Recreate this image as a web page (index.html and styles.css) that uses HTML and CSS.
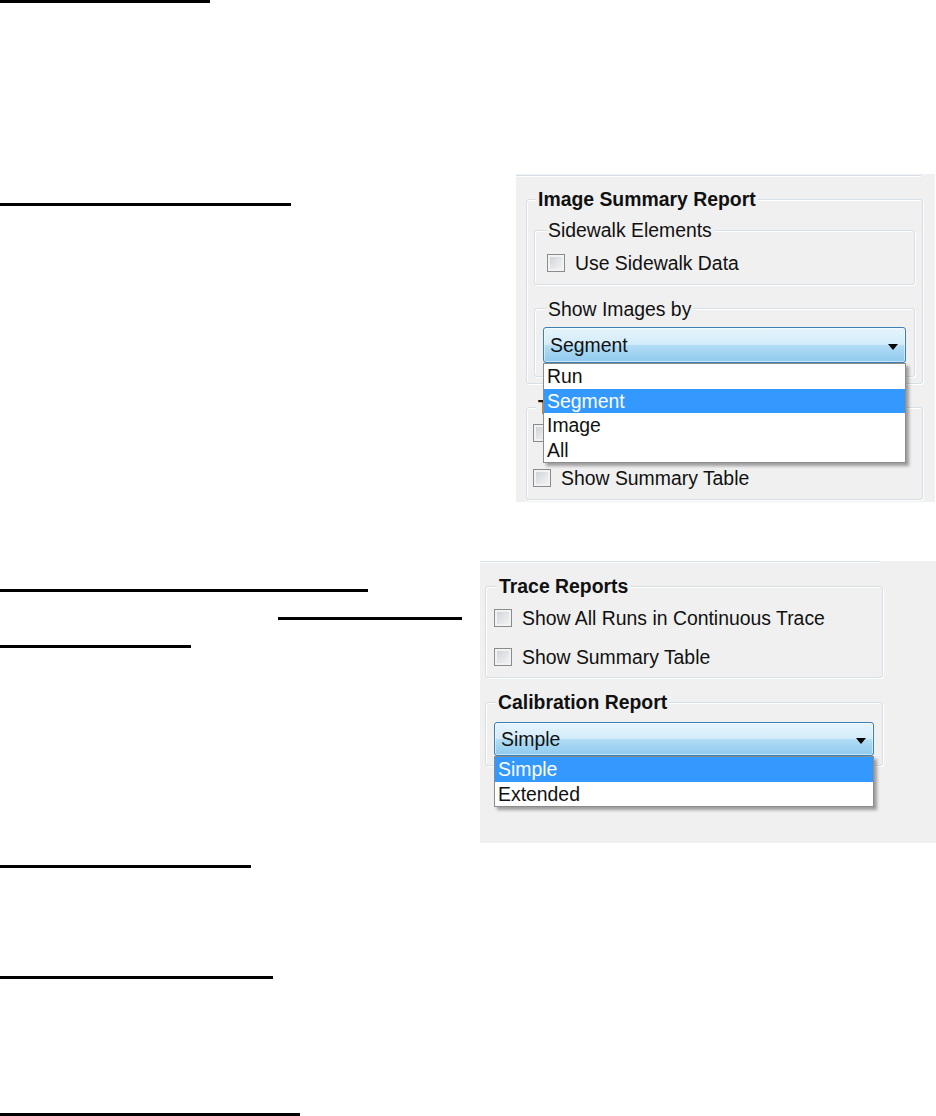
FILE: index.html
```html
<!DOCTYPE html>
<html lang="en">
<head>
<meta charset="utf-8">
<title>Report options</title>
<link rel="stylesheet" href="styles.css">
</head>
<body>
<div class="page">
  <div class="rule rule-a"></div>

  <section class="row row-b">
    <div class="notes notes-b">
      <div class="rule rule-b"></div>
    </div>
    <div class="panel panel-img">
      <div class="edge edge-img"></div>
      <div class="group group-isr">
        <div class="legend legend-bold legend-isr">Image Summary Report</div>
        <div class="group group-sidewalk">
          <div class="legend legend-sub">Sidewalk Elements</div>
          <div class="check check-sidewalk"><span class="box"></span><span>Use Sidewalk Data</span></div>
        </div>
        <div class="group group-showby">
          <div class="legend legend-sub legend-showby">Show Images by</div>
          <div class="combo combo-seg">
            <span class="combo-value">Segment</span>
            <svg class="arrow" width="10" height="6" viewBox="0 0 10 6"><path d="M0 0H10L5 6Z" fill="#000"/></svg>
            <ul class="dropdown">
              <li>Run</li>
              <li class="sel">Segment</li>
              <li>Image</li>
              <li>All</li>
            </ul>
          </div>
        </div>
      </div>
      <div class="group group-trace1">
        <div class="legend legend-bold legend-isr">Trace Reports</div>
        <div class="check check-t1a"><span class="box"></span><span>Show All Runs in Continuous Trace</span></div>
        <div class="check check-t1b"><span class="box"></span><span>Show Summary Table</span></div>
      </div>
    </div>
  </section>

  <section class="row row-c">
    <div class="notes notes-c">
      <div class="rule rule-c1"></div>
      <div class="rule rule-c2"></div>
      <div class="rule rule-c3"></div>
    </div>
    <div class="panel panel-cal">
      <div class="edge edge-cal"></div>
      <div class="group group-trace2">
        <div class="legend legend-bold legend-t2">Trace Reports</div>
        <div class="check check-t2a"><span class="box"></span><span>Show All Runs in Continuous Trace</span></div>
        <div class="check check-t2b"><span class="box"></span><span>Show Summary Table</span></div>
      </div>
      <div class="group group-cal">
        <div class="legend legend-bold legend-cal">Calibration Report</div>
        <div class="combo combo-cal">
          <span class="combo-value">Simple</span>
          <svg class="arrow" width="10" height="6" viewBox="0 0 10 6"><path d="M0 0H10L5 6Z" fill="#000"/></svg>
          <ul class="dropdown">
            <li class="sel">Simple</li>
            <li>Extended</li>
          </ul>
        </div>
      </div>
    </div>
  </section>

  <section class="notes notes-d">
    <div class="rule rule-d1"></div>
    <div class="rule rule-d2"></div>
    <div class="rule rule-d3"></div>
  </section>
</div>
</body>
</html>
```

FILE: styles.css
```css
html, body {
  margin: 0;
  padding: 0;
  background: #fff;
}
body {
  font-family: "Liberation Sans", Arial, sans-serif;
  color: #111;
  overflow: hidden;
}
.page {
  width: 936px;
}

/* document underlines */
.rule {
  height: 3px;
  background: #000;
}
.rule-a { width: 210px; }
.row {
  display: flex;
  align-items: flex-start;
}
.notes { flex: none; }
.row-b { margin-top: 171px; }
.notes-b { padding-top: 29px; }
.rule-b { width: 291px; }

.row-c { margin-top: 59px; }
.rule-c1 { width: 368px; margin-top: 28px; }
.rule-c2 { width: 184px; margin-left: 278px; margin-top: 25px; }
.rule-c3 { width: 191px; margin-top: 25px; }

.rule-d1 { width: 251px; margin-top: 22px; }
.rule-d2 { width: 273px; margin-top: 108px; }
.rule-d3 { width: 300px; margin-top: 134px; }

/* dialog panels */
.panel {
  background: #f0f0f0;
  box-sizing: border-box;
  margin-left: auto;
}
.panel-img {
  width: 419px;
  height: 328px;
  margin-right: 1px;
  padding-top: 1px;
}
.panel-cal {
  width: 456px;
  height: 282px;
}
.edge {
  height: 1px;
  background: #d6e0e6;
  box-shadow: 0 1px 0 #fbfdfe;
}
.edge-img { width: 405px; }
.edge-cal { width: 400px; }

.group {
  border: 1px solid #d5dfe5;
  border-radius: 3px;
  box-shadow: inset 1px 1px 0 #fff, 1px 1px 0 #fff;
  box-sizing: border-box;
}
.legend {
  width: fit-content;
  background: #f0f0f0;
  padding: 0 2px;
  font-size: 19.4px;
  line-height: 22px;
  margin-top: -12px;
  white-space: nowrap;
}
.legend-bold { font-weight: bold; }
.legend-isr { margin-left: 9px; }
.legend-sub { margin-left: 11px; }
.legend-showby { margin-top: -11px; }
.legend-t2 { margin-left: 11px; }
.legend-cal { margin-left: 10px; }

.group-isr {
  margin: 23px 0 0 10px;
  width: 397px;
  padding-bottom: 6px;
}
.group-sidewalk {
  margin: 20px 7px 0;
  padding-bottom: 10px;
}
.group-showby {
  margin: 23px 7px 0;
  padding-bottom: 13px;
}
.group-trace1 {
  margin: 23px 0 0 10px;
  width: 397px;
  padding-bottom: 10px;
}
.group-trace2 {
  margin: 24px 0 0 5px;
  width: 398px;
  padding-bottom: 9px;
}
.group-cal {
  margin: 24px 0 0 5px;
  width: 398px;
  padding-bottom: 9px;
}

/* checkboxes */
.check {
  display: flex;
  align-items: center;
  font-size: 19.4px;
  line-height: 22px;
  white-space: nowrap;
}
.box {
  flex: none;
  width: 18px;
  height: 18px;
  box-sizing: border-box;
  border: 1px solid #8a8b8b;
  background: linear-gradient(135deg, #c9ced4 0%, #e2e4e7 50%, #f6f6f6 100%);
  box-shadow: inset 0 0 0 2px #f2f2f2;
  margin-right: 10px;
}
.check-sidewalk { margin-top: 11px; padding-left: 12px; }
.check-t1a { margin-top: 4px; padding-left: 6px; }
.check-t1b { margin-top: 23px; padding-left: 6px; }
.check-t2a { margin-top: 10px; padding-left: 8px; }
.check-t2b { margin-top: 17px; padding-left: 8px; }

/* combo boxes */
.combo {
  position: relative;
  display: flex;
  align-items: center;
  box-sizing: border-box;
  border: 1px solid #3c7fb1;
  border-radius: 3px;
  padding: 0 7px 0 6px;
  font-size: 19.4px;
  line-height: 22px;
  background: linear-gradient(#e6f4fc 0%, #d3ecfa 48%, #b1dcf5 52%, #8fcaee 100%);
  box-shadow: inset 0 0 0 1px rgba(255, 255, 255, 0.5);
}
.combo-seg {
  margin: 7px 0 0 8px;
  width: 363px;
  height: 36px;
}
.combo-cal {
  margin: 9px 0 0 8px;
  width: 380px;
  height: 34px;
}
.arrow {
  display: block;
  margin-left: auto;
  margin-top: 3px;
}
.dropdown {
  position: absolute;
  z-index: 5;
  top: calc(100% + 1px);
  left: -1px;
  right: -1px;
  margin: 0;
  padding: 0;
  list-style: none;
  background: #fff;
  border: 1px solid #8c8c8c;
  box-shadow: 3px 3px 3px rgba(0, 0, 0, 0.35);
  font-size: 19.4px;
}
.dropdown li {
  height: 24.5px;
  line-height: 24.5px;
  padding-left: 3px;
  color: #111;
}
.dropdown li.sel {
  background: #3399ff;
  color: #fff;
}
```
